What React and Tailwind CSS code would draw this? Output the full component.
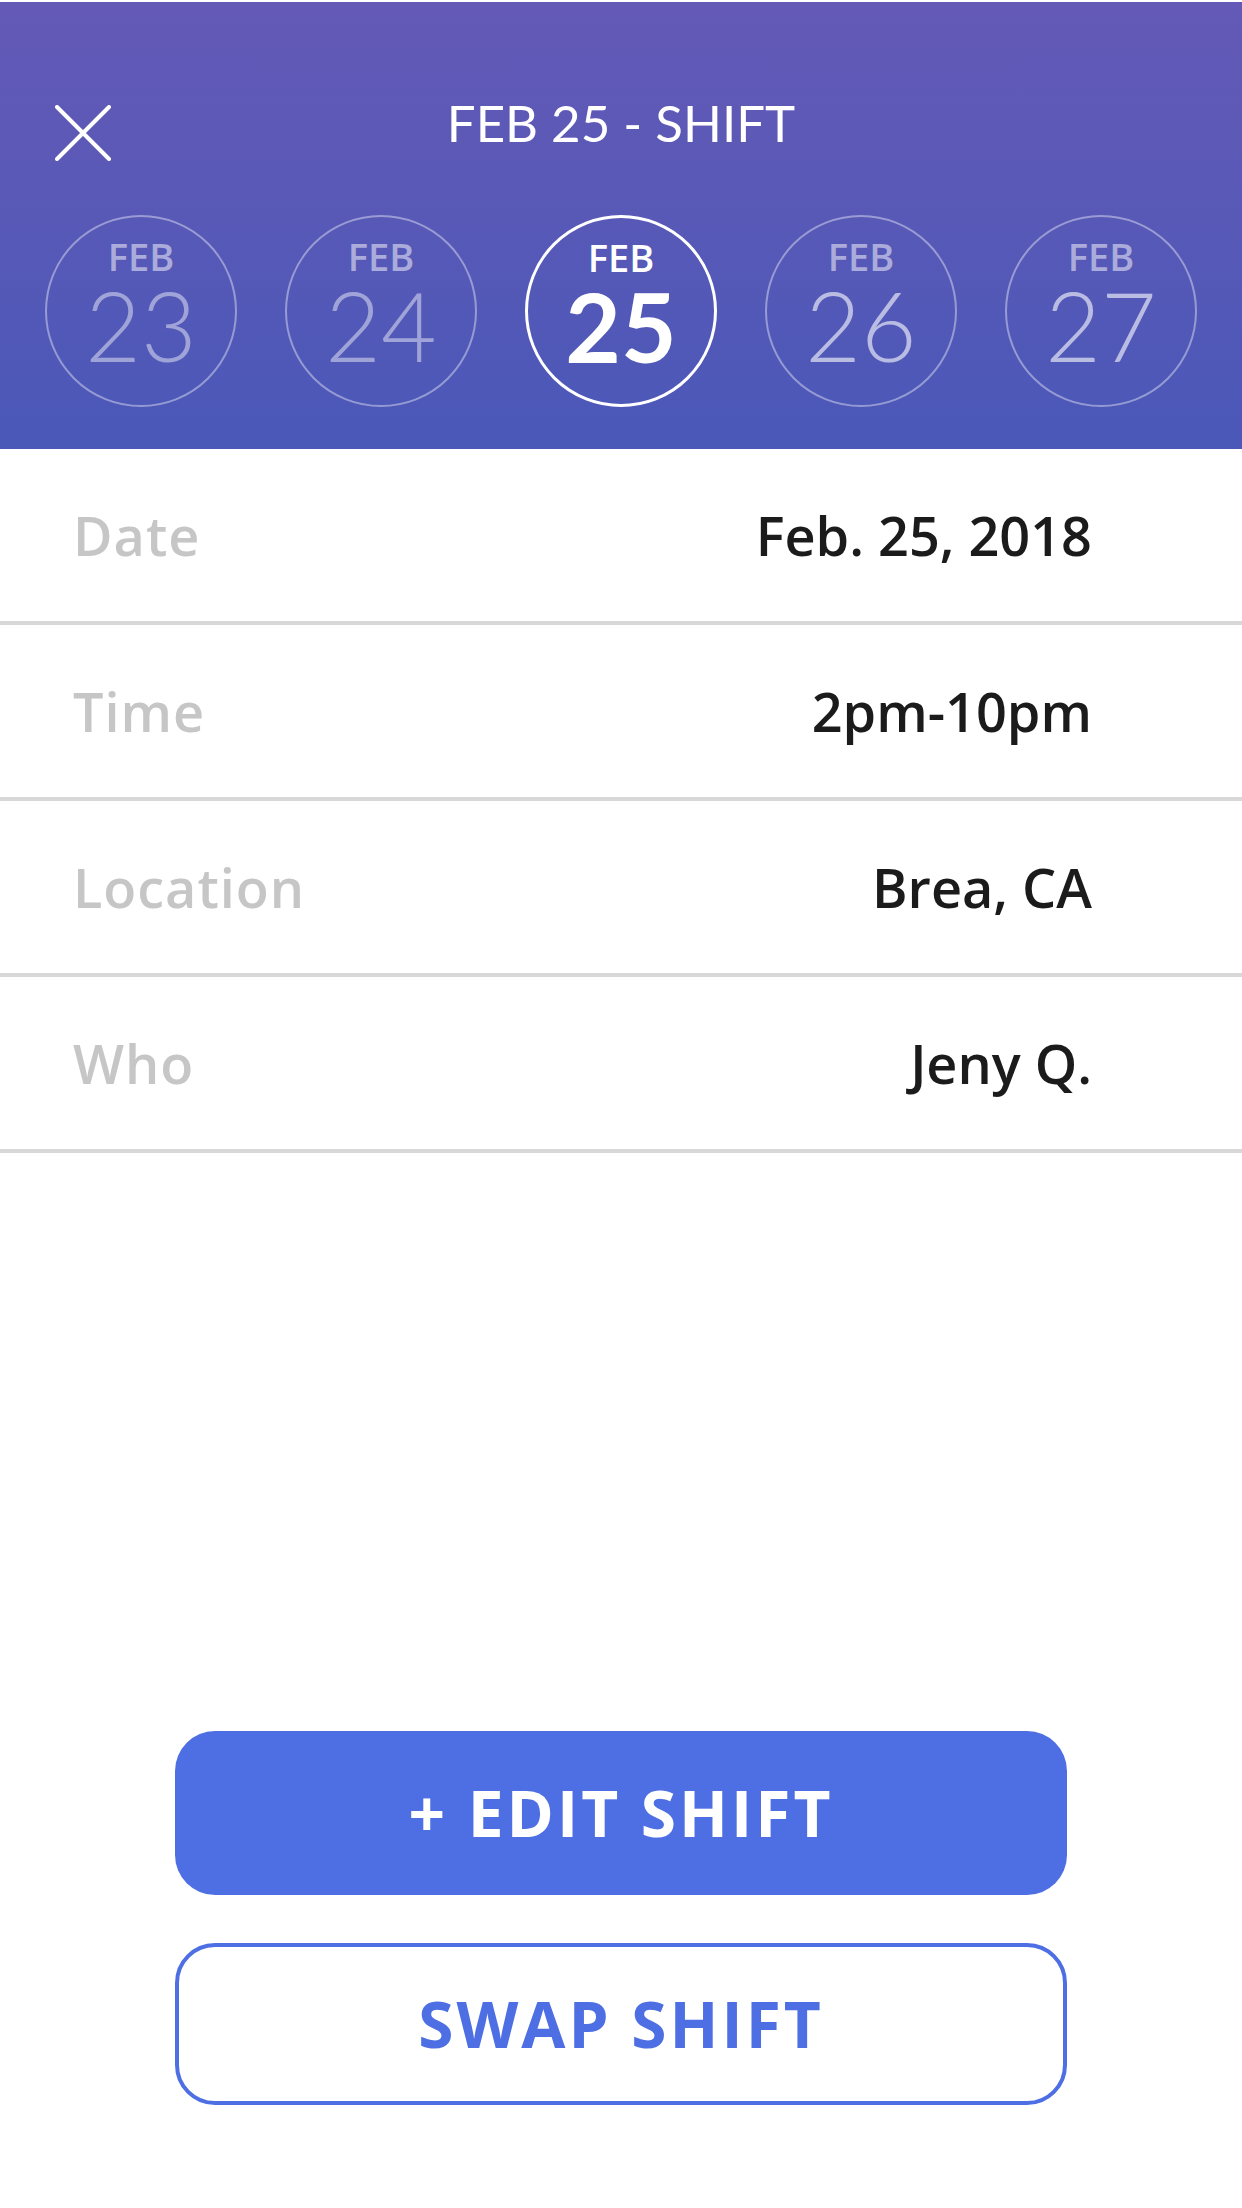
const days = [
  { n: '23', state: 'past' },
  { n: '24', state: 'past' },
  { n: '25', state: 'active' },
  { n: '26', state: 'next' },
  { n: '27', state: 'next' },
];

const rows = [
  ['Date', 'Feb. 25, 2018'],
  ['Time', '2pm-10pm'],
  ['Location', 'Brea, CA'],
  ['Who', 'Jeny Q.'],
];

function DayCircle({ n, state }) {
  const active = state === 'active';
  return (
    <div
      className={
        'flex h-[192px] w-[192px] flex-col items-center rounded-full pt-[20px] ' +
        (active ? 'border-[3px] border-white' : 'border-2 border-white/40')
      }
    >
      <span
        className={
          'font-["Open_Sans",sans-serif] text-[38px] font-semibold leading-[38px] ' +
          (active ? 'text-white' : 'text-white/50')
        }
      >
        FEB
      </span>
      <span
        className={
          'mt-[2px] font-["Lato",sans-serif] text-[96px] leading-[96px] ' +
          (active ? 'font-bold text-white' : state === 'past' ? 'font-light text-white/45' : 'font-light text-white/60')
        }
      >
        {n}
      </span>
    </div>
  );
}

export default function App() {
  return (
    <div className="flex min-h-[2208px] w-[1242px] flex-col bg-white">
      <div className="h-[2px] bg-white" />
      <header className="bg-gradient-to-b from-[#6459b6] to-[#4a58b8] pb-[42px] pt-[71px]">
        <div className="flex h-[100px] items-center">
          <div className="flex w-[111px] justify-end pt-[20px]">
            <svg width="56" height="56" viewBox="0 0 56 56" fill="none" stroke="white" strokeWidth="4" strokeLinecap="round">
              <path d="M2 2 L54 54 M54 2 L2 54" />
            </svg>
          </div>
          <h1 className="flex-1 text-center font-['Lato',sans-serif] text-[51px] text-white">FEB 25 - SHIFT</h1>
          <div className="w-[111px]" />
        </div>
        <div className="mt-[42px] flex justify-between px-[45px]">
          {days.map((d) => (
            <DayCircle key={d.n} {...d} />
          ))}
        </div>
      </header>

      <div className="font-['Open_Sans',sans-serif] text-[54px] font-semibold">
        {rows.map(([label, value]) => (
          <div key={label} className="flex h-[176px] items-center justify-between border-b-4 border-[#d8d8d8] pl-[73px] pr-[150px]">
            <span className="tracking-[1px] text-[#c6c6c6]">{label}</span>
            <span className="text-[#1b1b1b]">{value}</span>
          </div>
        ))}
      </div>

      <div className="flex-1" />

      <div className="flex flex-col gap-[48px] px-[175px] pb-[103px] font-['Open_Sans',sans-serif]">
        <button className="h-[164px] rounded-[40px] bg-[#4e6fe4] text-[64px] font-bold tracking-[3px] text-white">+ EDIT SHIFT</button>
        <button className="h-[162px] rounded-[40px] border-4 border-[#4e6fe4] bg-white text-[64px] font-bold tracking-[3px] text-[#4e6fe4]">SWAP SHIFT</button>
      </div>
    </div>
  );
}
